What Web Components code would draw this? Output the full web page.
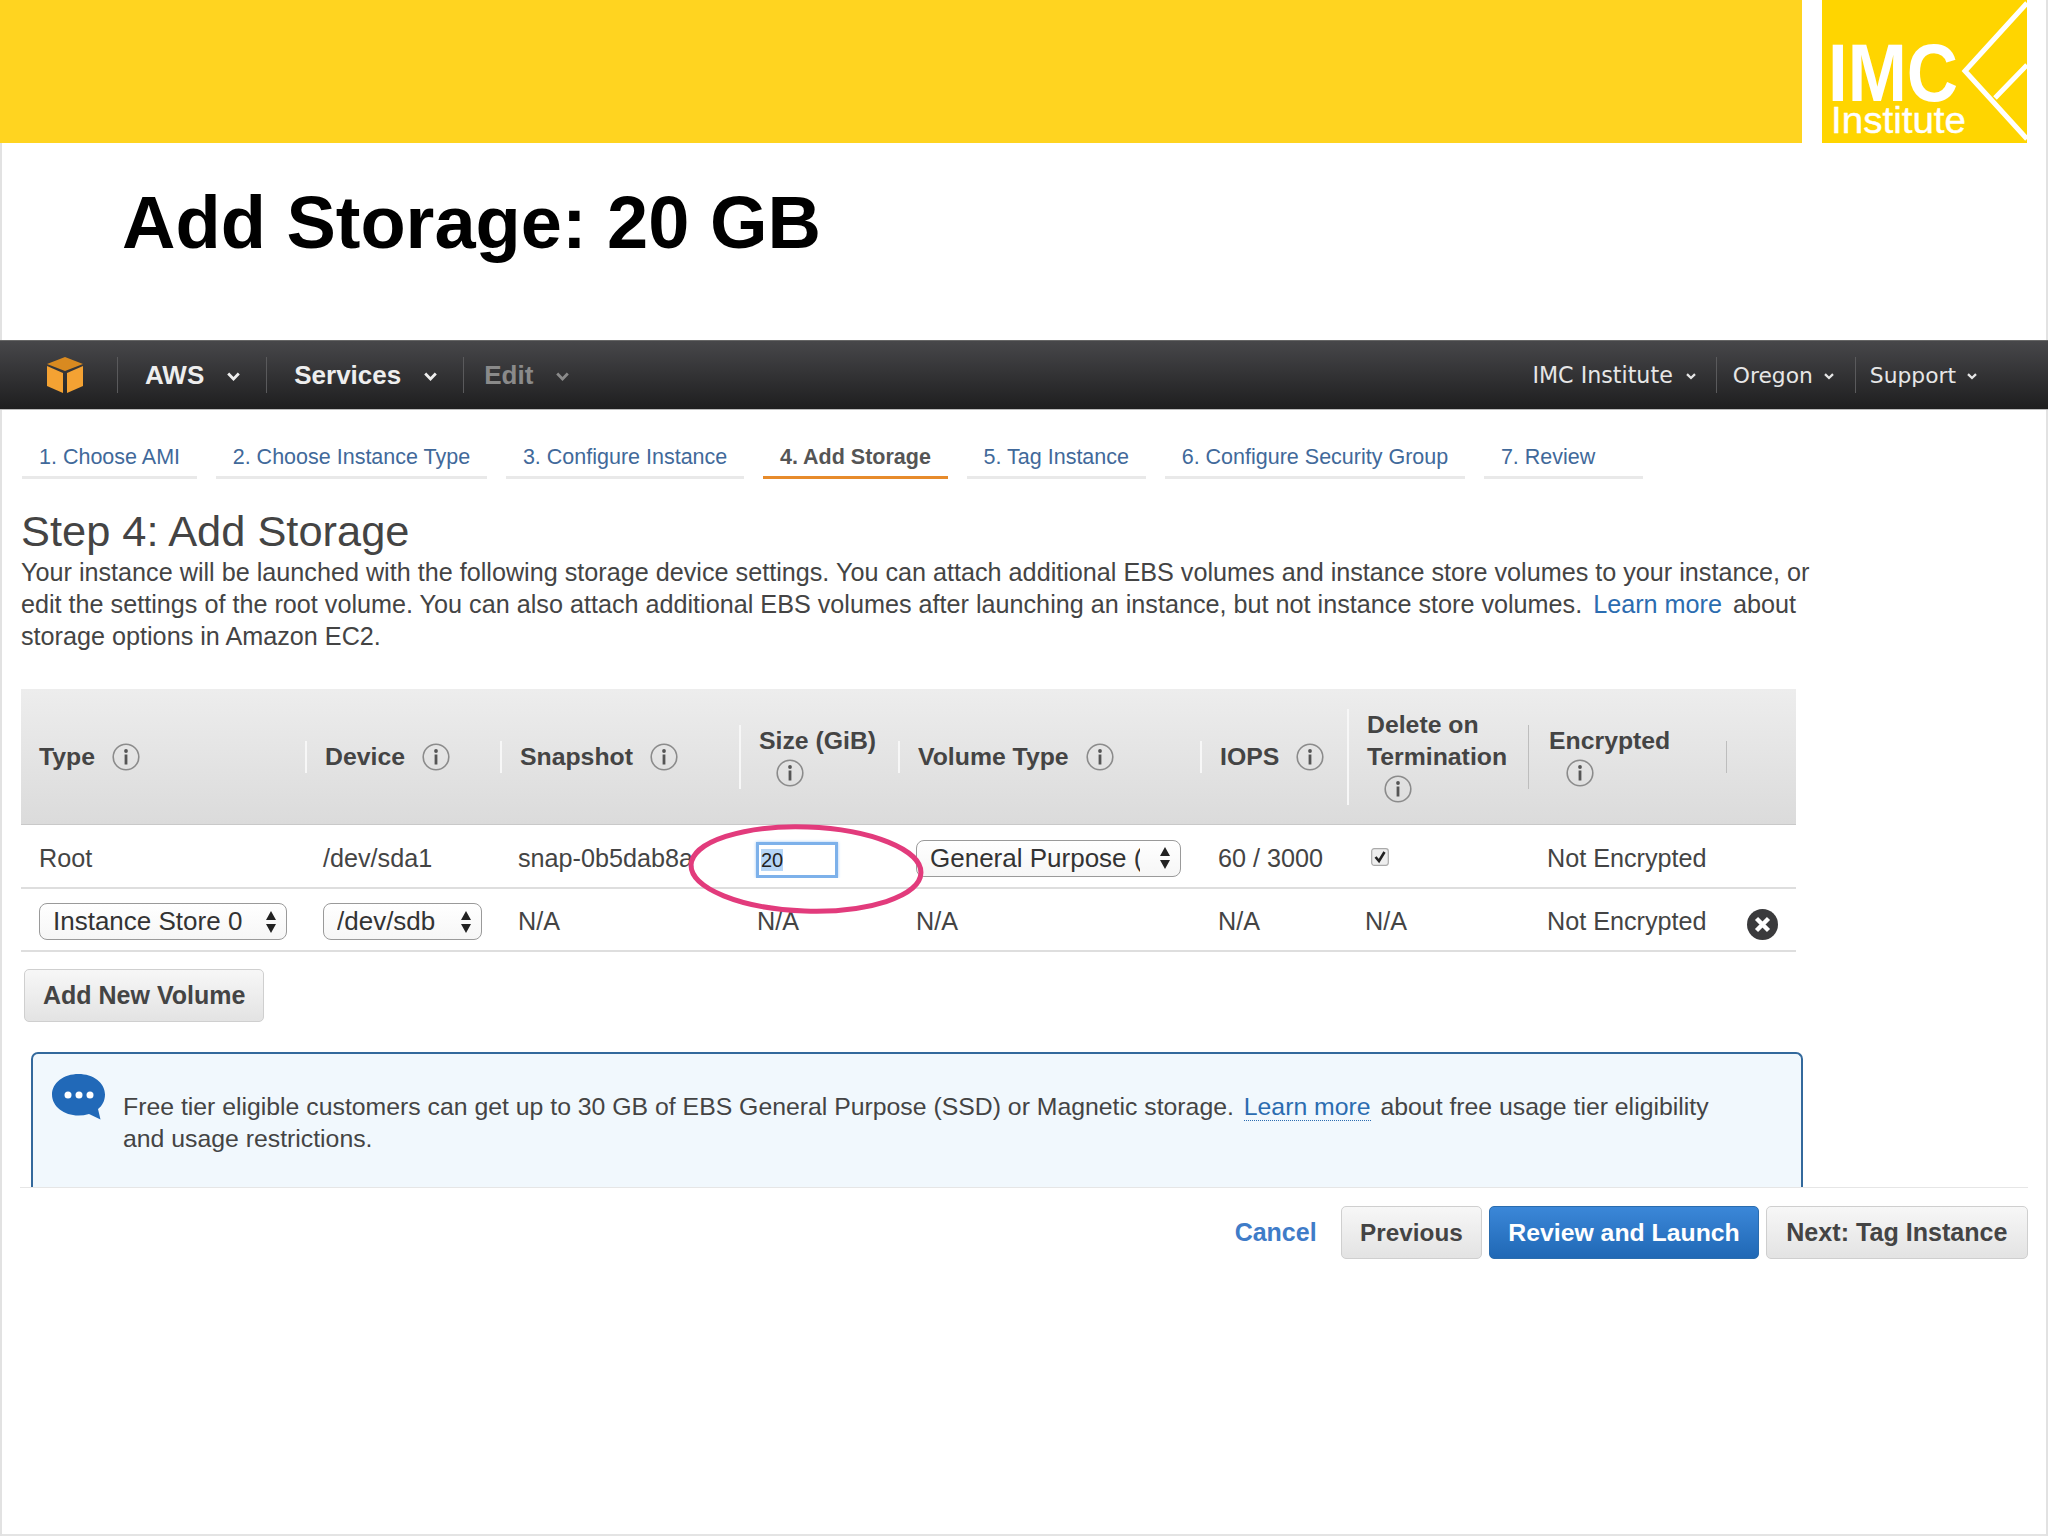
<!DOCTYPE html>
<html lang="en"><head><meta charset="utf-8"><title>Add Storage: 20 GB</title>
<style>
html,body{margin:0;padding:0;background:#fff}
body{width:2048px;height:1536px;overflow:hidden;font-family:"Liberation Sans",Arial,sans-serif;color:#444}
a{color:#2b6cb0;text-decoration:none}
</style></head><body>
<imc-slide>
  <slide-banner></slide-banner>
  <slide-title>Add Storage: 20 GB</slide-title>
  <aws-navbar>
    <nav-item slot="left">AWS</nav-item>
    <nav-item slot="left">Services</nav-item>
    <nav-item slot="left" muted>Edit</nav-item>
    <nav-link slot="right" first style="--pl:0px;--pr:20px;--g:13px;--fs:22.2px">IMC Institute</nav-link>
    <nav-link slot="right" style="--pl:16px;--pr:21px;--g:11px">Oregon</nav-link>
    <nav-link slot="right" style="--pl:14px;--pr:0px;--g:11px">Support</nav-link>
  </aws-navbar>
  <wizard-tabs>
    <wizard-tab>1. Choose AMI</wizard-tab>
    <wizard-tab>2. Choose Instance Type</wizard-tab>
    <wizard-tab>3. Configure Instance</wizard-tab>
    <wizard-tab active>4. Add Storage</wizard-tab>
    <wizard-tab>5. Tag Instance</wizard-tab>
    <wizard-tab>6. Configure Security Group</wizard-tab>
    <wizard-tab style="padding-right:48px">7. Review</wizard-tab>
  </wizard-tabs>
  <step-intro>
    <span slot="title">Step 4: Add Storage</span>
    Your instance will be launched with the following storage device settings. You can attach additional EBS volumes and instance store volumes to your instance, or<br>
    edit the settings of the root volume. You can also attach additional EBS volumes after launching an instance, but not instance store volumes. <a style="margin:0 4px">Learn more</a> about<br>
    storage options in Amazon EC2.
  </step-intro>
  <storage-table>
    <storage-row head>
      <head-cell first>Type<info-icon></info-icon></head-cell>
      <head-cell>Device<info-icon></info-icon></head-cell>
      <head-cell>Snapshot<info-icon></info-icon></head-cell>
      <head-cell>Size (GiB)<br><info-icon></info-icon></head-cell>
      <head-cell>Volume Type<info-icon></info-icon></head-cell>
      <head-cell>IOPS<info-icon></info-icon></head-cell>
      <head-cell>Delete on<br>Termination<br><info-icon></info-icon></head-cell>
      <head-cell dark>Encrypted<br><info-icon></info-icon></head-cell>
      <head-cell dark>&nbsp;</head-cell>
    </storage-row>
    <storage-row>
      <body-cell>Root</body-cell>
      <body-cell>/dev/sda1</body-cell>
      <body-cell>snap-0b5dab8a</body-cell>
      <body-cell><size-input>20</size-input></body-cell>
      <body-cell><aws-select style="--w:265px;--tw:210px">General Purpose (SSD)</aws-select></body-cell>
      <body-cell>60 / 3000</body-cell>
      <body-cell><check-box></check-box></body-cell>
      <body-cell style="padding-left:19px">Not Encrypted</body-cell>
      <body-cell></body-cell>
    </storage-row>
    <storage-row short>
      <body-cell><aws-select style="--w:248px;--tw:205px">Instance Store 0</aws-select></body-cell>
      <body-cell><aws-select style="--w:159px;--tw:116px">/dev/sdb</aws-select></body-cell>
      <body-cell>N/A</body-cell>
      <body-cell>N/A</body-cell>
      <body-cell>N/A</body-cell>
      <body-cell>N/A</body-cell>
      <body-cell>N/A</body-cell>
      <body-cell style="padding-left:19px">Not Encrypted</body-cell>
      <body-cell><remove-icon></remove-icon></body-cell>
    </storage-row>
  </storage-table>
  <add-row><aws-button style="--p:18px;--fs:25px">Add New Volume</aws-button></add-row>
  <info-box>Free tier eligible customers can get up to 30 GB of EBS General Purpose (SSD) or Magnetic storage. <a style="border-bottom:1px dotted #2b6cb0;margin:0 3px">Learn more</a> about free usage tier eligibility<br>and usage restrictions.</info-box>
  <wizard-footer>
    <cancel-link>Cancel</cancel-link>
    <aws-button style="--p:18.500px;--fs:24.3px">Previous</aws-button>
    <aws-button primary style="--p:18.500px;--fs:24.8px">Review and Launch</aws-button>
    <aws-button style="--p:19.500px;--fs:25.1px">Next: Tag Instance</aws-button>
  </wizard-footer>
</imc-slide>
<script>
function def(name,css,html){customElements.define(name,class extends HTMLElement{constructor(){super();this.attachShadow({mode:'open'}).innerHTML='<style>'+css+'</style>'+html;}});}
const bigChev='<svg width="13" height="9" viewBox="0 0 13 9"><path d="M1.2 1.5 6.5 7 11.8 1.5" fill="none" stroke="currentColor" stroke-width="2.8"/></svg>';
const smallChev='<svg width="10" height="7" viewBox="0 0 10 7"><path d="M1 1.200 5 5 9 1.200" fill="none" stroke="currentColor" stroke-width="2.300"/></svg>';
const arrows='<svg width="12" height="24" viewBox="0 0 12 24"><path d="M6 1 11 10H1ZM6 23 11 14H1Z" fill="#222"/></svg>';

def('imc-slide',':host{display:flex;flex-direction:column;width:2048px;height:1536px;box-sizing:border-box;box-shadow:inset 2px 0 #e2e2e2,inset -2px 0 #e2e2e2,inset 0 -2px #e4e4e4}','<slot></slot>');

def('slide-banner',':host{display:flex;height:143px;flex:none}.bar{width:1802px;background:#ffd420}.logo{margin-left:20px;width:205px;height:143px;display:block}',
'<div class="bar"></div><svg class="logo" viewBox="0 0 205 143"><rect width="205" height="143" fill="#ffd500"/>'+
'<text x="6" y="101" font-family="Liberation Sans" font-weight="bold" font-size="82" fill="#fff" textLength="130" lengthAdjust="spacingAndGlyphs">IMC</text>'+
'<text x="9" y="133" font-family="Liberation Sans" font-size="36" fill="#fff" stroke="#fff" stroke-width=".4" textLength="135" lengthAdjust="spacingAndGlyphs">Institute</text>'+
'<path d="M205 3 143 71 205 139M173 98 205 65" fill="none" stroke="#fff" stroke-width="5"/></svg>');

def('slide-title',':host{display:block;height:197px;flex:none;box-sizing:border-box;padding:35px 0 0 122px;font-size:74px;line-height:90px;font-weight:bold;color:#000}','<slot></slot>');

def('aws-navbar',':host{display:flex;height:70px;flex:none;align-items:center;box-sizing:border-box;border-top:1px solid #666;border-bottom:1px solid #bbb;background:linear-gradient(#47474a,#1e1e1f);padding-right:71px}.cube{margin-left:47px;width:36px;height:36px;padding-right:34px;flex:none}.l{display:flex;align-items:center}.r{display:flex;align-items:center;margin-left:auto}',
'<svg class="cube" viewBox="0 0 36 36"><path d="M18 0 36 7 18 14 0 7Z" fill="#d98a20"/><path d="M0 9 16 16V36L0 29Z" fill="#f4a233"/><path d="M36 9 20 16V36L36 29Z" fill="#f4a233"/></svg><div class="l"><slot name="left"></slot></div><div class="r"><slot name="right"></slot></div>');

def('nav-item',':host{display:flex;align-items:center;height:36px;box-sizing:border-box;border-left:1px solid #5a5a5c;padding:0 26px 0 27px;font-size:26px;font-weight:bold;color:#eee;gap:23px}:host([muted]){color:#8a8a8a;padding-left:20px}svg{margin-top:3px}',
'<span><slot></slot></span>'+bigChev);

def('nav-link',':host{display:flex;align-items:center;height:36px;border-left:1px solid #5a5a5c;padding:0 var(--pr) 0 var(--pl);font-family:"DejaVu Sans",sans-serif;font-size:var(--fs,21.8px);color:#e6e6e6;gap:var(--g)}:host([first]){border-left:0}svg{margin-top:2px}',
'<span><slot></slot></span>'+smallChev);

def('wizard-tabs',':host{display:flex;flex:none;gap:18.7px;margin:32px 0 0 22px}','<slot></slot>');
def('wizard-tab',':host{display:block;box-sizing:border-box;padding:0 17px 4px;height:37px;line-height:30px;font-size:21.5px;color:#41699a;border-bottom:3px solid #e9e9e9}:host([active]){color:#555;font-weight:bold;border-bottom-color:#e78b2b}','<slot></slot>');

def('step-intro',':host{display:block;flex:none;margin:27px 0 0 21px;font-size:25.2px;line-height:32px;color:#444;white-space:nowrap}.h{font-size:43.400px;line-height:50px;color:#444}','<div class="h"><slot name="title"></slot></div><slot></slot>');

def('storage-table',':host{display:block;position:relative;flex:none;margin:37px 0 0 21px;width:1775px;--cols:284px 195px 239px 159px 302px 147px 181px 198px 70px}svg{position:absolute;left:0;top:0;overflow:visible;pointer-events:none}',
'<slot></slot><svg width="1775" height="262"><ellipse cx="785" cy="180" rx="115" ry="42" transform="rotate(2 785 180)" fill="none" stroke="#e23b7c" stroke-width="5"/></svg>');

def('storage-row',':host{display:grid;grid-template-columns:var(--cols);height:64px;box-sizing:border-box;border-bottom:2px solid #dedede;align-items:center;font-size:25.2px;color:#444}:host([short]){height:63px}:host([head]){height:136px;border-bottom:1px solid #c9c9c9;background:linear-gradient(#ededed,#dbdbdb)}','<slot></slot>');
def('head-cell',':host{display:block;box-sizing:border-box;padding-left:18px;border-left:2px solid #f7f7f7;font-weight:bold;font-size:24.8px;line-height:32px;color:#444}:host([first]){border-left:0}:host([dark]){border-left:1px solid #bdbdbd;padding-left:20px}','<slot></slot>');
def('body-cell',':host{display:flex;align-items:center;padding:4px 0 0 18px;min-height:36px;white-space:nowrap;overflow:hidden}','<slot></slot>');
def('info-icon',':host{display:inline-block;width:28px;height:28px;margin-left:17px;vertical-align:-6px}svg{display:block}',
'<svg width="28" height="28" viewBox="0 0 28 28"><circle cx="14" cy="14" r="12.8" fill="none" stroke="#8b8b8b" stroke-width="1.6"/><circle cx="14" cy="8" r="1.9" fill="#555"/><rect x="12.6" y="11.5" width="2.8" height="10" fill="#555"/></svg>');

def('aws-select',':host{display:flex;align-items:center;width:var(--w);height:37px;box-sizing:border-box;border:1.5px solid #9a9a9a;border-radius:8px;background:linear-gradient(#fff,#f6f6f6);padding-left:13px;font-size:26px;color:#333}.t{width:var(--tw);overflow:hidden;white-space:nowrap;flex:none}svg{margin-left:auto;margin-right:9px;flex:none}',
'<span class="t"><slot></slot></span>'+arrows);
def('size-input',':host{display:block;width:82px;height:36px;box-sizing:border-box;border:3px solid #7db1ea;box-shadow:0 0 3px #a5caf3;background:#fff;font-size:20px;line-height:30px;padding-left:2px;color:#222;margin-top:4px;margin-left:-1px}span{background:#b6d6f6}','<span><slot></slot></span>');
def('check-box',':host{display:block;width:18px;height:18px;margin-left:6px;margin-top:-2px}svg{display:block}',
'<svg width="18" height="18" viewBox="0 0 18 18"><rect x=".7" y=".7" width="16.6" height="16.6" rx="2.5" fill="#eee" stroke="#aaa" stroke-width="1.2"/><path d="M4.5 9 8 13 13.5 4" fill="none" stroke="#222" stroke-width="2.6"/></svg>');
def('remove-icon',':host{display:block;width:31px;height:31px;margin:5px 0 0 3px}svg{display:block}',
'<svg width="31" height="31" viewBox="0 0 31 31"><circle cx="15.5" cy="15.5" r="15.5" fill="#3a3a3c"/><path d="M9.5 9.5 21.5 21.5M21.5 9.5 9.5 21.5" stroke="#fff" stroke-width="4.4"/></svg>');

def('add-row',':host{display:block;flex:none;margin:17px 0 0 24px}','<slot></slot>');
def('aws-button',':host{display:inline-flex;align-items:center;height:53px;box-sizing:border-box;padding:0 var(--p);border:1px solid #cfcfcf;border-radius:5px;background:linear-gradient(#f7f7f7,#e3e3e3);font-size:var(--fs);font-weight:bold;color:#444;white-space:nowrap}:host([primary]){background:linear-gradient(#3b87d8,#2068b5);border-color:#2a6cae;color:#fff}','<slot></slot>');
def('info-box',':host{display:flex;flex:none;box-sizing:border-box;margin:30px 0 0 31px;width:1772px;height:135px;border:2px solid #33699c;border-bottom:0;border-radius:7px 7px 0 0;background:#f1f8fd;padding:20px 0 0 19px;font-size:24.8px;line-height:32px;color:#444}svg{flex:none;margin-right:18px}',
'<svg width="53" height="46" viewBox="0 0 53 46"><path d="M26.5 0C41 0 53 8.5 53 20.5C53 27 50 32 46 35L48.5 45.5 37 40C33.500 41 30 41.500 26.500 41.500C12 41.500 0 32.500 0 20.500C0 8.500 12 0 26.500 0Z" fill="#2169b8"/><circle cx="16" cy="21" r="3.500" fill="#fff"/><circle cx="27" cy="21" r="3.500" fill="#fff"/><circle cx="38" cy="21" r="3.500" fill="#fff"/></svg><div style="margin-top:17px"><slot></slot></div>');
def('wizard-footer',':host{display:flex;flex:none;align-items:center;justify-content:flex-end;gap:6.5px;box-sizing:border-box;margin-left:20px;width:2008px;border-top:1px solid #e6e6e6;padding-top:18px}','<slot></slot>');
def('cancel-link',':host{display:block;font-size:25px;font-weight:bold;color:#3f7cc8;margin-right:17.5px}','<slot></slot>');
</script>
</body></html>
